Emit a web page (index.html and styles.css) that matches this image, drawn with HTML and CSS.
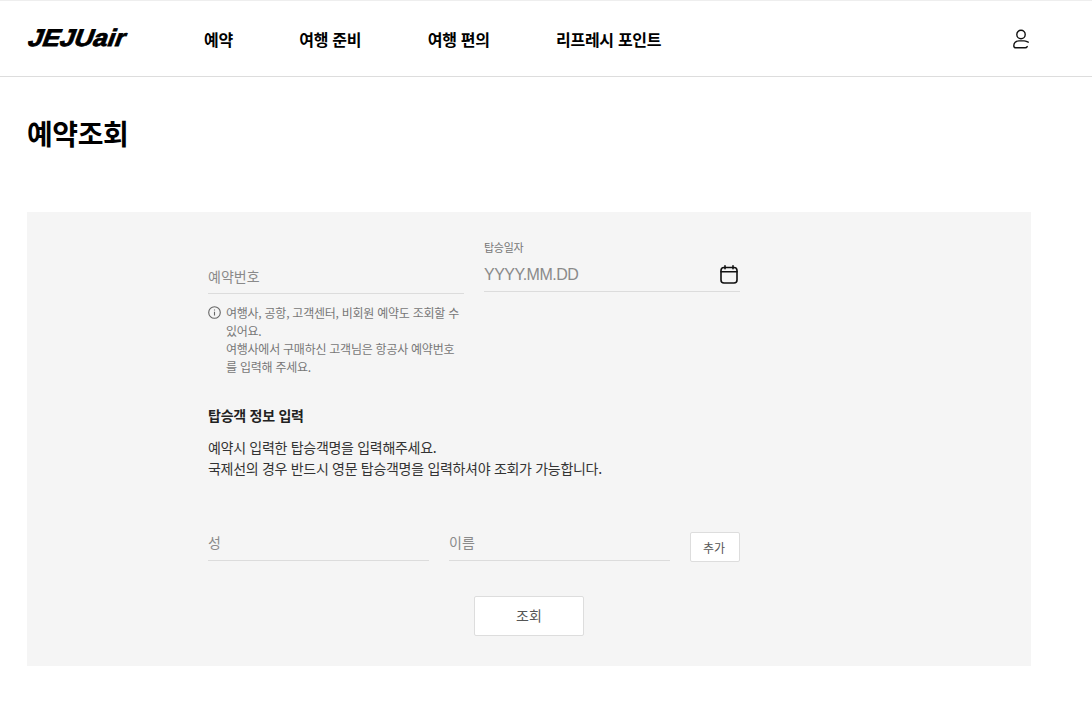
FILE: index.html
```html
<!DOCTYPE html>
<html lang="ko">
<head>
<meta charset="utf-8">
<title>예약조회</title>
<link rel="stylesheet" href="styles.css">
</head>
<body>
<header class="header">
  <div class="logo-box"><a class="logo">JEJUair</a></div>
  <nav class="nav">
    <a>예약</a>
    <a>여행 준비</a>
    <a>여행 편의</a>
    <a>리프레시 포인트</a>
  </nav>
  <a class="user" aria-label="사용자">
    <svg width="18" height="22" viewBox="0 0 18 22" fill="none" stroke="#111" stroke-width="1.4" stroke-linecap="round" stroke-linejoin="round">
      <circle cx="9" cy="6.5" r="4.2"/>
      <path d="M16.2 14.2 15 13.600c-1-.5-2-.7-3-.7H7c-3.200 0-5.200 2.300-5.200 4.800 0 1.300.8 2.100 2 2.100h9.400c1 0 1.600-.4 2-1.200"/>
    </svg>
  </a>
</header>
<main class="main">
  <h1 class="title">예약조회</h1>
  <section class="panel">
    <div class="form">
      <div class="top-row">
        <div class="col">
          <div class="field field-ref"><span class="ph">예약번호</span></div>
          <div class="note">
            <svg class="note-icon" width="13" height="13" viewBox="0 0 13 13" fill="none" stroke="#666" stroke-width="1.100">
              <circle cx="6.500" cy="6.500" r="5.800"/>
              <path d="M6.500 5.700v3.800M6.500 3.400v1.100"/>
            </svg>
            <p>여행사, 공항, 고객센터, 비회원 예약도 조회할 수 있어요.<br>여행사에서 구매하신 고객님은 항공사 예약번호를 입력해 주세요.</p>
          </div>
        </div>
        <div class="col">
          <div class="label">탑승일자</div>
          <div class="field field-date">
            <span class="ph ph-date">YYYY.MM.DD</span>
            <svg width="20" height="20" viewBox="0 0 20 20" fill="none" stroke="#111" stroke-width="1.600" stroke-linecap="round">
              <rect x="2" y="2.500" width="16" height="15.500" rx="3"/>
              <path d="M2 6.800h16M6 .8v3M14 .8v3"/>
            </svg>
          </div>
        </div>
      </div>
      <h2 class="sub">탑승객 정보 입력</h2>
      <p class="desc">예약시 입력한 탑승객명을 입력해주세요.<br>국제선의 경우 반드시 영문 탑승객명을 입력하셔야 조회가 가능합니다.</p>
      <div class="name-row">
        <div class="field field-name"><span class="ph">성</span></div>
        <div class="field field-name"><span class="ph">이름</span></div>
        <button class="btn-add" type="button">추가</button>
      </div>
      <div class="actions"><button class="btn-search" type="button">조회</button></div>
    </div>
  </section>
</main>
</body>
</html>
```
FILE: styles.css
```css
* { box-sizing: border-box; }
html, body { margin: 0; padding: 0; }
body {
  background: #fff;
  color: #111;
  font-family: "Noto Sans CJK KR", "Noto Sans", sans-serif;
  overflow: hidden;
}
.header {
  height: 77px;
  border-top: 1px solid #eee;
  border-bottom: 1px solid #ddd;
  display: flex;
  align-items: center;
  padding-left: 27px;
}
.logo-box { width: 177px; }
.logo {
  display: inline-block;
  font-family: "Liberation Sans", sans-serif;
  font-size: 24px;
  font-weight: 700;
  color: #000;
  line-height: 1;
  -webkit-text-stroke: 0.8px #000;
  transform-origin: left bottom;
  transform: translateX(-2px) skewX(-20deg) scaleX(1.08);
}
.nav {
  display: flex;
  gap: 66.5px;
  font-size: 16px;
  font-weight: 700;
  letter-spacing: -0.3px;
  color: #000;
}
.user {
  margin-left: auto;
  margin-right: 62px;
  display: flex;
}
.main { padding: 0 61px 0 27px; }
.title {
  margin: 36px 0 0;
  height: 99px;
  font-size: 28px;
  line-height: 40px;
  font-weight: 700;
  letter-spacing: -0.4px;
  color: #000;
}
.panel {
  height: 454px;
  background: #f5f5f5;
  padding: 27px 0 0 181px;
}
.form { width: 532px; }
.top-row { display: flex; gap: 20px; }
.col { width: 256px; }
.field {
  display: flex;
  align-items: center;
  border-bottom: 1px solid #dcdcdc;
  font-size: 14px;
}
.ph { color: #8a8a8a; }
.field-ref { height: 55px; padding-top: 19px; }
.label {
  font-size: 11px;
  line-height: 16px;
  color: #777;
  letter-spacing: -0.3px;
}
.field-date {
  height: 37px;
  justify-content: space-between;
  padding-right: 1px;
  padding-top: 4px;
}
.ph-date {
  font-family: "Liberation Sans", sans-serif;
  font-size: 16px;
  letter-spacing: -0.5px;
}
.note {
  display: flex;
  gap: 5px;
  margin-top: 10px;
  padding-right: 2px;
  font-size: 12px;
  line-height: 18px;
  color: #777;
}
.note-icon { flex: none; margin-top: 2px; }
.note p { margin: 0; letter-spacing: -0.25px; }
.sub {
  margin: 29px 0 0;
  font-size: 14px;
  line-height: 20px;
  font-weight: 700;
  letter-spacing: -0.25px;
  color: #222;
}
.desc {
  margin: 12px 0 0;
  width: 480px;
  font-size: 14px;
  line-height: 21px;
  letter-spacing: -0.3px;
  color: #333;
}
.name-row {
  display: flex;
  gap: 20px;
  margin-top: 42px;
  align-items: flex-start;
}
.field-name { width: 221px; height: 40px; padding-top: 3px; }
.btn-add {
  width: 50px;
  height: 30px;
  margin-top: 11px;
  background: #fff;
  border: 1px solid #ddd;
  border-radius: 2px;
  font: inherit;
  font-size: 12px;
  color: #555;
  padding: 0 2px 0 0;
}
.actions { width: 642px; display: flex; justify-content: center; margin-top: 34px; }
.btn-search {
  width: 110px;
  height: 40px;
  background: #fff;
  border: 1px solid #ddd;
  border-radius: 2px;
  font: inherit;
  font-size: 14px;
  color: #555;
  padding: 0 0 2px;
}
```
